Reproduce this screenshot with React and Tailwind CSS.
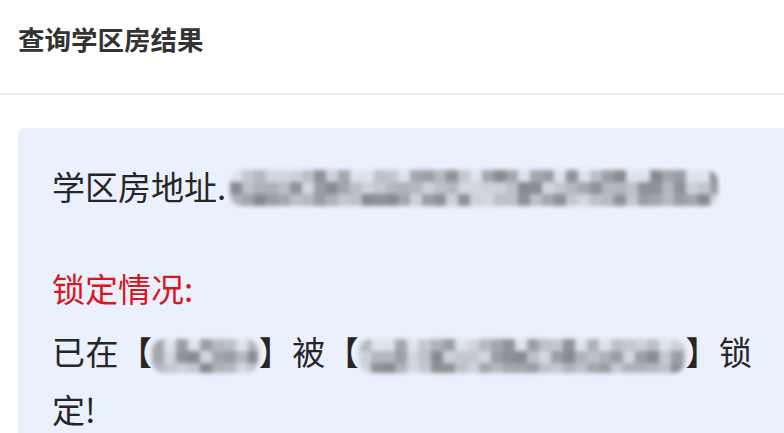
import React from "react";

const SHADES = ["#8e9196", "#a3a7ad", "#b4b8bf", "#c3c8cf", "#d2d7df", "#9a9ea4", "#bcc1c8", "#cdd2da", "#aeb2b8", "#878b90"];

function Mosaic({ width, rows = 3, cell = 12, seed = 1, className = "" }) {
  const cols = Math.ceil(width / cell);
  let s = seed * 9301 + 49297;
  const rnd = () => {
    s = (s * 9301 + 49297) % 233280;
    return s / 233280;
  };
  const grid = [];
  for (let r = 0; r < rows; r++) {
    const row = [];
    for (let c = 0; c < cols; c++) {
      const edge = r === 0 ? 0.35 : 0;
      row.push(rnd() < edge ? "#dde3ec" : SHADES[Math.floor(rnd() * SHADES.length)]);
    }
    grid.push(row);
  }
  return (
    <span
      className={"inline-flex flex-col align-middle overflow-hidden rounded-[12px] blur-[2px] " + className}
      style={{ width }}
    >
      {grid.map((row, i) => (
        <span key={i} className="flex">
          {row.map((c, j) => (
            <span key={j} className="block h-[12px] w-[12px] shrink-0" style={{ backgroundColor: c }} />
          ))}
        </span>
      ))}
    </span>
  );
}

export default function App() {
  return (
    <div
      className="w-[784px] h-[433px] overflow-hidden bg-white"
      style={{ fontFamily: '"Noto Sans CJK SC", "Noto Sans", sans-serif' }}
    >
      <div className="h-[95px] border-b-2 border-[#ececec] pl-[18px] flex items-center">
        <h1 className="text-[26.5px] font-bold text-[#333333] leading-none -mt-[15px]">查询学区房结果</h1>
      </div>
      <div className="ml-[18px] mt-[33px] rounded-l-[6px] bg-[#ebf1fc] pl-[34px] pr-[32px] pt-[29px] h-[400px] text-[33px] leading-[58px] text-[#262626]">
        <p className="whitespace-nowrap">
          学区房地址.
          <Mosaic width={488} rows={3} seed={3} className="ml-[4px] -mt-[6px] h-[36px]" />
        </p>
        <p className="mt-[44px] text-[#d9161d]">锁定情况:</p>
        <p className="mt-[5px] text-justify w-[700px]">
          已在【<Mosaic width={106} rows={3} seed={7} className="h-[34px]" />】被【<Mosaic width={326} rows={3} seed={11} className="h-[34px]" />】锁定!
        </p>
      </div>
    </div>
  );
}
